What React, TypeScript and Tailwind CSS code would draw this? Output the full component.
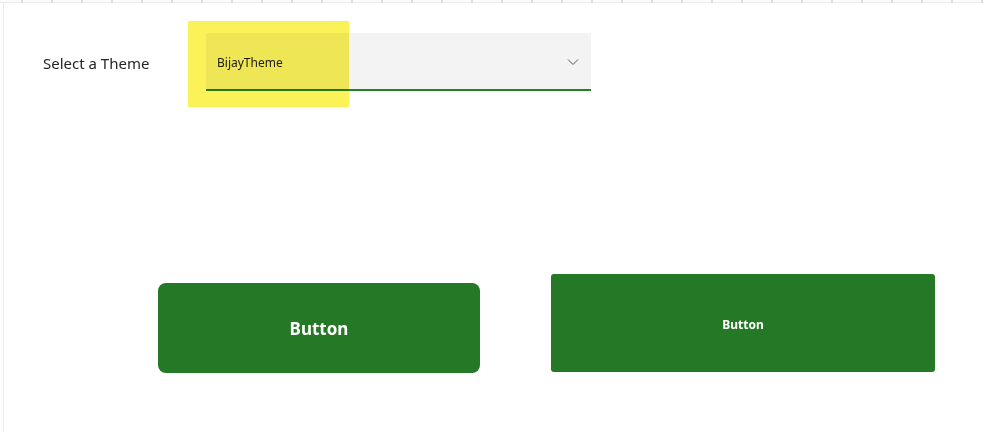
import React from "react";

export default function App() {
  const ticks = Array.from({ length: 33 }, (_, i) => 21 + i * 30);
  return (
    <div className="relative w-[984px] h-[432px] bg-white overflow-hidden" style={{ fontFamily: '"Noto Sans", "Open Sans", sans-serif' }}>
      {/* top ruler */}
      <div className="relative h-[3px] border-b border-[#ebebeb] bg-[#fbfbfb]">
        {ticks.map((x) => (
          <div key={x} className="absolute top-0 w-[2px] h-[3px] bg-[#dcdcdc]" style={{ left: x }} />
        ))}
      </div>
      <div className="flex h-[429px] border-l border-[#ececec] ml-[3px]">
        <div className="flex flex-col">
          <div className="flex items-center pt-[30px]">
            <div className="w-[202px] shrink-0 pl-[39px] text-[15px] text-[#252525] pt-[3px]">Select a Theme</div>
            <div className="flex items-center justify-between w-[385px] h-[58px] bg-[#f3f3f3] border-b-2 border-[#238024] pl-[11px] pr-[12px]">
              <span className="text-[12px] text-[#202020] pt-[3px]">BijayTheme</span>
              <svg width="12" height="8" viewBox="0 0 12 8" className="mt-[2px]">
                <path d="M1 1.5 L6 6.5 L11 1.5" fill="none" stroke="#555" strokeWidth="1" />
              </svg>
            </div>
          </div>
          <div className="flex items-end pl-[154px] pt-[183px] gap-[71px]">
            <button className="w-[322px] h-[90px] rounded-[8px] bg-[#247826] text-white text-[17px] font-bold pt-[2px]">Button</button>
            <button className="w-[384px] h-[98px] rounded-[3px] bg-[#247826] text-white text-[12px] font-bold mb-[1px] pt-[4px]">Button</button>
          </div>
        </div>
      </div>
      {/* yellow highlight overlay */}
      <div className="absolute left-[188px] top-[21px] w-[161px] h-[86px] bg-[#fbf25a] mix-blend-multiply" />
    </div>
  );
}
